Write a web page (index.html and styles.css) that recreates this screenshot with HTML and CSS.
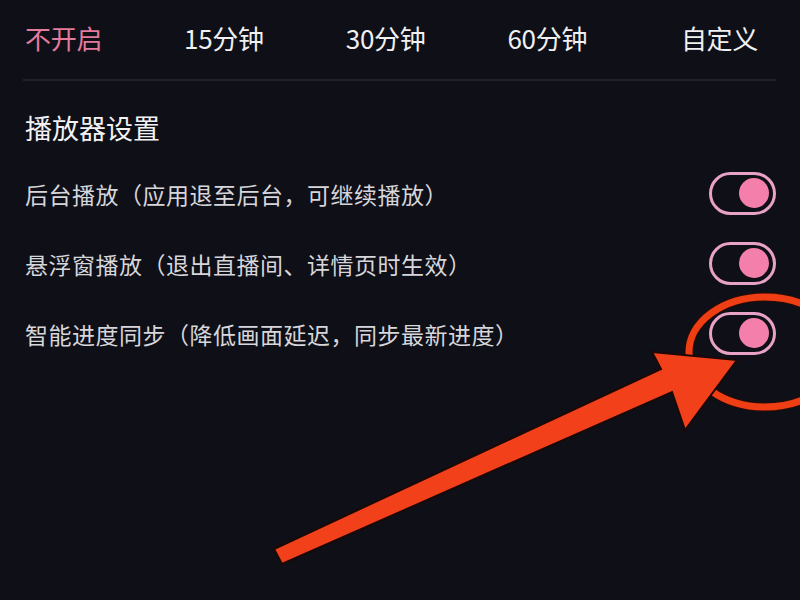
FILE: index.html
```html
<!DOCTYPE html>
<html lang="zh-CN">
<head>
<meta charset="utf-8">
<title>播放器设置</title>
<link rel="stylesheet" href="styles.css">
</head>
<body>
<div class="page">
  <nav class="tabs">
    <span class="tab active">不开启</span>
    <span class="tab">15分钟</span>
    <span class="tab">30分钟</span>
    <span class="tab">60分钟</span>
    <span class="tab last">自定义</span>
  </nav>
  <div class="divider"></div>
  <section class="section">
    <h2 class="title">播放器设置</h2>
    <div class="row">
      <span class="label">后台播放（应用退至后台，可继续播放）</span>
      <span class="toggle"><span class="knob"></span></span>
    </div>
    <div class="row">
      <span class="label">悬浮窗播放（退出直播间、详情页时生效）</span>
      <span class="toggle"><span class="knob"></span></span>
    </div>
    <div class="row">
      <span class="label">智能进度同步（降低画面延迟，同步最新进度）</span>
      <span class="toggle"><span class="knob"></span></span>
    </div>
  </section>
  <svg class="overlay" width="800" height="600" viewBox="0 0 800 600" xmlns="http://www.w3.org/2000/svg">
    <ellipse cx="765" cy="352" rx="76" ry="55" fill="none" stroke="#2a0c06" stroke-width="9"/>
    <ellipse cx="765" cy="352" rx="76" ry="55" fill="none" stroke="#ef3e14" stroke-width="7"/>
    <polygon points="274,549 661,369 652,352 737,360 685,430 672,392 282,564" fill="#f2401a" stroke="#1c0805" stroke-width="2" stroke-linejoin="miter"/>
  </svg>
</div>
</body>
</html>
```

FILE: styles.css
```css
* { box-sizing: border-box; }
html, body {
  margin: 0;
  padding: 0;
  background: #0f0f17;
}
body {
  font-family: "Noto Sans CJK SC", "Noto Sans", sans-serif;
  color: #d9d9de;
}
.page {
  position: relative;
  width: 800px;
  height: 600px;
  overflow: hidden;
  background: #0f0f17;
}
.tabs {
  display: flex;
  align-items: center;
  height: 76px;
  padding: 0 42px 0 25px;
  gap: 82px;
}
.tab {
  font-size: 26px;
  line-height: 30px;
  color: #f0f0f2;
  letter-spacing: -0.3px;
}
.tab.active { color: #e47b9d; }
.tab.last { margin-left: auto; }
.divider {
  height: 2px;
  margin: 3px 24px 0 23px;
  background: #22222c;
}
.section {
  padding: 0 24px 0 25px;
}
.title {
  margin: 27px 0 11px 0;
  font-size: 27px;
  line-height: 40px;
  font-weight: 400;
  color: #f2f2f4;
}
.row {
  display: flex;
  align-items: center;
  justify-content: space-between;
  height: 70px;
}
.label {
  font-size: 23px;
  line-height: 30px;
  letter-spacing: 0.5px;
  color: #d6d6db;
}
.toggle {
  display: flex;
  align-items: center;
  justify-content: flex-end;
  width: 67px;
  height: 43px;
  padding-right: 4px;
  border: 3px solid #e8a2c6;
  border-radius: 22px;
  margin-top: -2px;
}
.knob {
  width: 30px;
  height: 30px;
  border-radius: 50%;
  background: #f47fab;
}
.overlay {
  position: absolute;
  left: 0;
  top: 0;
}
```
